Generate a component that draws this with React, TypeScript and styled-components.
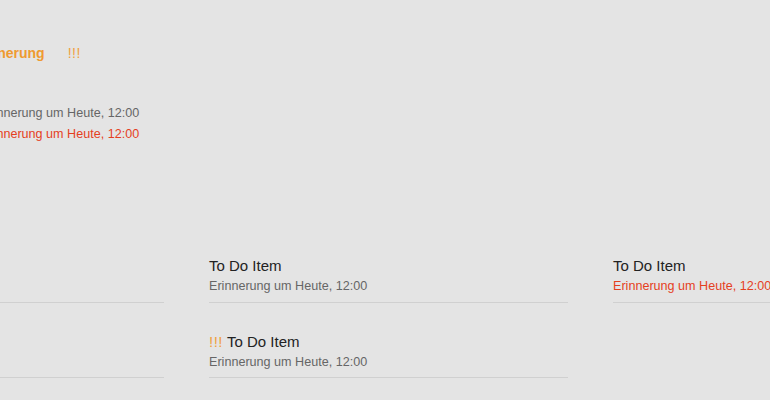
import { FC } from 'react';
import styled, { createGlobalStyle } from 'styled-components';

const GlobalStyle = createGlobalStyle`
    html, body {
        margin: 0;
        padding: 0;
        background: #e4e4e4;
        font-family: "Helvetica Neue", "Liberation Sans", Arial, sans-serif;
    }
`

interface ITodo {
    title: string,
    reminder: string,
    priority?: boolean,
    overdue?: boolean,
}

const columns: ITodo[][] = [
    [
        { title: 'To Do Item', reminder: 'Erinnerung um Heute, 12:00' },
        { title: 'To Do Item', reminder: 'Erinnerung um Heute, 12:00' },
    ],
    [
        { title: 'To Do Item', reminder: 'Erinnerung um Heute, 12:00' },
        { title: 'To Do Item', reminder: 'Erinnerung um Heute, 12:00', priority: true },
    ],
    [
        { title: 'To Do Item', reminder: 'Erinnerung um Heute, 12:00', overdue: true },
    ],
]

const Page = styled.div`
    width: 770px;
    height: 400px;
    overflow: hidden;
`

const Canvas = styled.div`
    margin-left: -195px;
    width: 1200px;
`

const Detail = styled.section`
    height: 228px;
    padding-left: 176px;
    box-sizing: border-box;
`

const HeadingRow = styled.div`
    display: flex;
    align-items: baseline;
    gap: 23px;
    padding-top: 44px;
    margin-left: -11px;
`

const Heading = styled.h2`
    margin: 0;
    font-size: 14px;
    line-height: 18px;
    font-weight: bold;
    color: #ef9a30;
`

const Bang = styled.span`
    font-size: 14px;
    color: #f0a040;
    letter-spacing: 0.5px;
`

const Reminders = styled.div`
    display: flex;
    flex-direction: column;
    gap: 5px;
    margin-top: 43px;
`

const Reminder = styled.p<{ $overdue?: boolean }>`
    margin: 0;
    font-size: 12.6px;
    line-height: 16px;
    color: ${p => p.$overdue ? '#e4401e' : '#666'};
`

const Board = styled.div`
    display: grid;
    grid-template-columns: repeat(3, 359px);
    column-gap: 45px;
`

const Column = styled.div`
    display: flex;
    flex-direction: column;
`

const Item = styled.div`
    padding: 29px 0 8px;
    border-bottom: 1px solid #d0d0d0;

    & + & {
        padding: 30px 0 7px;
    }
`

const Title = styled.div`
    font-size: 15px;
    line-height: 18px;
    color: #222;
`

const Priority = styled.span`
    color: #f0a040;
    margin-right: 4px;
    letter-spacing: 0.5px;
`

const Sub = styled(Reminder)`
    margin-top: 3px;
`

const TodoItem: FC<{ value: ITodo }> = ({ value }) => (
    <Item>
        <Title>
            {value.priority && <Priority>!!!</Priority>}
            {value.title}
        </Title>
        <Sub $overdue={value.overdue}>{value.reminder}</Sub>
    </Item>
)

const App: FC = () => {
    return (
        <Page>
            <GlobalStyle />
            <Canvas>
                <Detail>
                    <HeadingRow>
                        <Heading>Erinnerung</Heading>
                        <Bang>!!!</Bang>
                    </HeadingRow>
                    <Reminders>
                        <Reminder>Erinnerung um Heute, 12:00</Reminder>
                        <Reminder $overdue>Erinnerung um Heute, 12:00</Reminder>
                    </Reminders>
                </Detail>
                <Board>
                    {columns.map((col, i) => (
                        <Column key={i}>
                            {col.map((todo, j) => <TodoItem key={j} value={todo} />)}
                        </Column>
                    ))}
                </Board>
            </Canvas>
        </Page>
    )
}

export default App;
